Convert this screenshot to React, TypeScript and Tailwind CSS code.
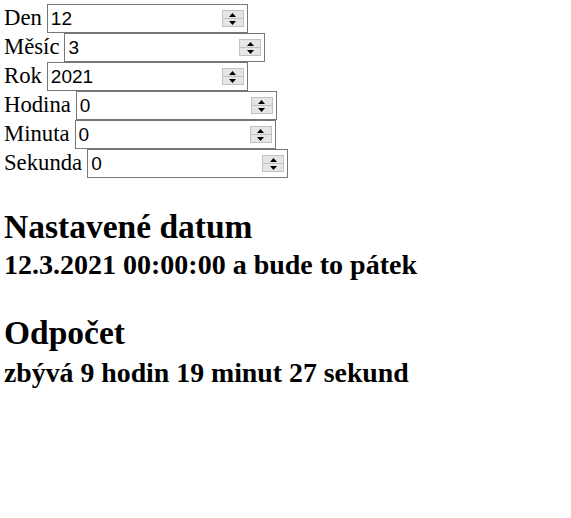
import { useState } from 'react';

const FIELDS = [
  { key: 'den', label: 'Den', value: '12' },
  { key: 'mesic', label: 'Měsíc', value: '3' },
  { key: 'rok', label: 'Rok', value: '2021' },
  { key: 'hodina', label: 'Hodina', value: '0' },
  { key: 'minuta', label: 'Minuta', value: '0' },
  { key: 'sekunda', label: 'Sekunda', value: '0' },
];

function Spinner() {
  return (
    <div className="flex flex-col w-[22px] h-[17px] border border-[#c2c2c2] bg-[#e6e6e6] shrink-0">
      <div className="flex-1 flex items-center justify-center border-b border-[#c2c2c2]">
        <svg width="7" height="4" viewBox="0 0 7 4"><path d="M3.5 0L7 4H0z" fill="#000" /></svg>
      </div>
      <div className="flex-1 flex items-center justify-center">
        <svg width="7" height="4" viewBox="0 0 7 4"><path d="M0 0h7L3.5 4z" fill="#000" /></svg>
      </div>
    </div>
  );
}

function NumberField({ label, initial }: { label: string; initial: string }) {
  const [value, setValue] = useState(initial);
  return (
    <div className="h-[29px] flex items-center gap-[5px]">
      <span>{label}</span>
      <div className="w-[201px] h-[29px] flex items-center border border-[#767676] bg-white pr-[3px]">
        <input
          type="text"
          value={value}
          onChange={(e) => setValue(e.target.value)}
          className="flex-1 min-w-0 h-full pl-[3px] outline-none bg-transparent text-[19px] text-black font-['Liberation_Sans',Arial,sans-serif]"
        />
        <Spinner />
      </div>
    </div>
  );
}

export default function App() {
  return (
    <div className="min-h-[518px] bg-white text-black pl-[4px] pt-[4px] font-['Liberation_Serif','Times_New_Roman',serif] text-[22.7px]">
      {FIELDS.map((f) => (
        <NumberField key={f.key} label={f.label} initial={f.value} />
      ))}
      <h2 className="mt-[29px] text-[33.5px] leading-[40px] font-bold">Nastavené datum</h2>
      <h3 className="mt-[2px] text-[28px] leading-[32px] font-bold">12.3.2021 00:00:00 a bude to pátek</h3>
      <h2 className="mt-[32px] text-[33.5px] leading-[40px] font-bold">Odpočet</h2>
      <h3 className="mt-[4px] text-[27.8px] leading-[32px] font-bold">zbývá 9 hodin 19 minut 27 sekund</h3>
    </div>
  );
}
